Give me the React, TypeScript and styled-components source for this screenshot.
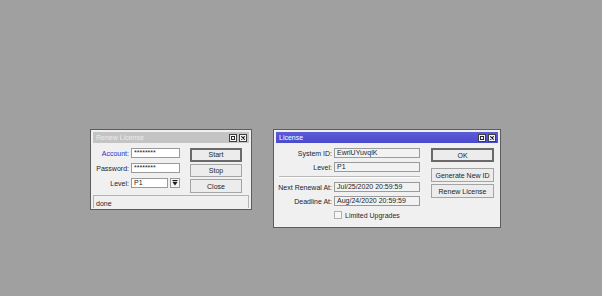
import styled, { createGlobalStyle } from 'styled-components'

const GlobalStyle = createGlobalStyle`
  html, body {
    margin: 0;
    padding: 0;
    background: #a0a0a0;
  }
  * {
    box-sizing: border-box;
  }
`

const Desktop = styled.div`
  position: relative;
  width: 602px;
  height: 296px;
  background: #a0a0a0;
  font-family: 'Liberation Sans', Arial, sans-serif;
  font-size: 7px;
  color: #1e1e1e;
  overflow: hidden;
`

const Window = styled.div<{ $left: number; $top: number; $w: number; $h: number }>`
  position: absolute;
  left: ${(p) => p.$left}px;
  top: ${(p) => p.$top}px;
  width: ${(p) => p.$w}px;
  height: ${(p) => p.$h}px;
  background: #f0f0f0;
  border: 1px solid #5c5c5c;
  padding: 2px 2px 1px 2px;
  display: flex;
  flex-direction: column;
`

const TitleBar = styled.div<{ $active?: boolean }>`
  height: 11px;
  flex: none;
  display: flex;
  align-items: center;
  justify-content: space-between;
  padding: 0 2px 0 3px;
  background: ${(p) => (p.$active ? 'linear-gradient(#5c5cd8, #4a4acc)' : '#c4c4c4')};
  color: ${(p) => (p.$active ? '#ffffff' : '#ececec')};
`

const TitleText = styled.span`
  line-height: 11px;
`

const TitleButtons = styled.div`
  display: flex;
  gap: 2px;
`

const TitleButton = styled.div`
  width: 8px;
  height: 8px;
  background: #f4f4f4;
  border: 1px solid #404040;
  display: flex;
  align-items: center;
  justify-content: center;
`

const Body = styled.div<{ $h?: number }>`
  display: flex;
  padding-top: 5px;
  height: ${(p) => (p.$h ? `${p.$h}px` : 'auto')};
  flex: ${(p) => (p.$h ? 'none' : '1')};
`

const Form = styled.div`
  display: flex;
  flex-direction: column;
`

const Row = styled.div<{ $gap?: number }>`
  display: flex;
  align-items: center;
  height: 10px;
  margin-bottom: ${(p) => p.$gap ?? 5}px;
`

const Label = styled.div<{ $w: number; $focus?: boolean }>`
  width: ${(p) => p.$w}px;
  text-align: right;
  padding-right: 2px;
  color: ${(p) => (p.$focus ? '#2e2ed0' : '#1e1e1e')};
  white-space: nowrap;
`

const Field = styled.div<{ $w: number; $ro?: boolean }>`
  width: ${(p) => p.$w}px;
  height: 10px;
  background: ${(p) => (p.$ro ? '#f2f2f2' : '#ffffff')};
  border: 1px solid #9a9a9a;
  padding-left: 2px;
  line-height: 8px;
  white-space: nowrap;
  overflow: hidden;
`

const DropButton = styled.div`
  width: 10px;
  height: 10px;
  margin-left: 2px;
  background: #f6f6f6;
  border: 1px solid #9a9a9a;
  display: flex;
  align-items: center;
  justify-content: center;
`

const Separator = styled.div<{ $w: number }>`
  width: ${(p) => p.$w}px;
  margin: 0 0 4px 3px;
  border-top: 1px solid #b8b8b8;
  border-bottom: 1px solid #ffffff;
`

const Buttons = styled.div<{ $left: number }>`
  display: flex;
  flex-direction: column;
  margin-left: ${(p) => p.$left}px;
`

const Button = styled.div<{ $w: number; $def?: boolean; $gap?: number }>`
  width: ${(p) => p.$w}px;
  height: 14px;
  margin-bottom: ${(p) => p.$gap ?? 2}px;
  background: #ececec;
  border: ${(p) => (p.$def ? '2px solid #6a6a6a' : '1px solid #a4a4a4')};
  display: flex;
  align-items: center;
  justify-content: center;
  color: #1e1e1e;
`

const StatusBar = styled.div`
  height: 13px;
  flex: none;
  border: 1px solid #b4b4b4;
  border-bottom: none;
  padding-left: 2px;
  display: flex;
  align-items: flex-end;
  padding-bottom: 1px;
`

const CheckRow = styled.div`
  display: flex;
  align-items: center;
  gap: 3px;
  margin-left: 58px;
  margin-top: 1px;
`

const CheckBox = styled.div`
  width: 8px;
  height: 8px;
  background: #f6f6f6;
  border: 1px solid #b0b0b0;
`

const CheckText = styled.span`
  color: #2a2a2a;
`

function WinButtons() {
  return (
    <TitleButtons>
      <TitleButton>
        <svg width='4' height='4' viewBox='0 0 4 4'>
          <rect x='0.5' y='0.5' width='3' height='3' fill='none' stroke='#2a2a2a' strokeWidth='1' />
        </svg>
      </TitleButton>
      <TitleButton>
        <svg width='4' height='4' viewBox='0 0 4 4'>
          <path d='M0.3 0.3 L3.7 3.7 M3.7 0.3 L0.3 3.7' stroke='#1a1a1a' strokeWidth='1.1' />
        </svg>
      </TitleButton>
    </TitleButtons>
  )
}

function RenewLicense() {
  return (
    <Window $left={90} $top={129} $w={162} $h={81}>
      <TitleBar>
        <TitleText>Renew License</TitleText>
        <WinButtons />
      </TitleBar>
      <Body $h={52}>
        <Form>
          <Row>
            <Label $w={38} $focus>Account:</Label>
            <Field $w={49}>********</Field>
          </Row>
          <Row>
            <Label $w={38}>Password:</Label>
            <Field $w={49}>********</Field>
          </Row>
          <Row>
            <Label $w={38}>Level:</Label>
            <Field $w={37}>P1</Field>
            <DropButton>
              <svg width='6' height='6' viewBox='0 0 6 6'>
                <rect x='0.5' y='0' width='5' height='1.2' fill='#1a1a1a' />
                <path d='M0.5 2 L5.5 2 L3 5.5 Z' fill='#1a1a1a' />
              </svg>
            </DropButton>
          </Row>
        </Form>
        <Buttons $left={10}>
          <Button $w={52} $def>Start</Button>
          <Button $w={52}>Stop</Button>
          <Button $w={52}>Close</Button>
        </Buttons>
      </Body>
      <StatusBar>done</StatusBar>
    </Window>
  )
}

function License() {
  return (
    <Window $left={273} $top={129} $w={228} $h={99}>
      <TitleBar $active>
        <TitleText>License</TitleText>
        <WinButtons />
      </TitleBar>
      <Body>
        <Form>
          <Row $gap={4}>
            <Label $w={58}>System ID:</Label>
            <Field $w={86} $ro>EwrlUYuvqlK</Field>
          </Row>
          <Row $gap={4}>
            <Label $w={58}>Level:</Label>
            <Field $w={86} $ro>P1</Field>
          </Row>
          <Separator $w={141} />
          <Row $gap={4}>
            <Label $w={58}>Next Renewal At:</Label>
            <Field $w={86} $ro>Jul/25/2020 20:59:59</Field>
          </Row>
          <Row $gap={4}>
            <Label $w={58}>Deadline At:</Label>
            <Field $w={86} $ro>Aug/24/2020 20:59:59</Field>
          </Row>
          <CheckRow>
            <CheckBox />
            <CheckText>Limited Upgrades</CheckText>
          </CheckRow>
        </Form>
        <Buttons $left={11}>
          <Button $w={63} $def $gap={6}>OK</Button>
          <Button $w={63}>Generate New ID</Button>
          <Button $w={63}>Renew License</Button>
        </Buttons>
      </Body>
    </Window>
  )
}

export default function App() {
  return (
    <Desktop>
      <GlobalStyle />
      <RenewLicense />
      <License />
    </Desktop>
  )
}
